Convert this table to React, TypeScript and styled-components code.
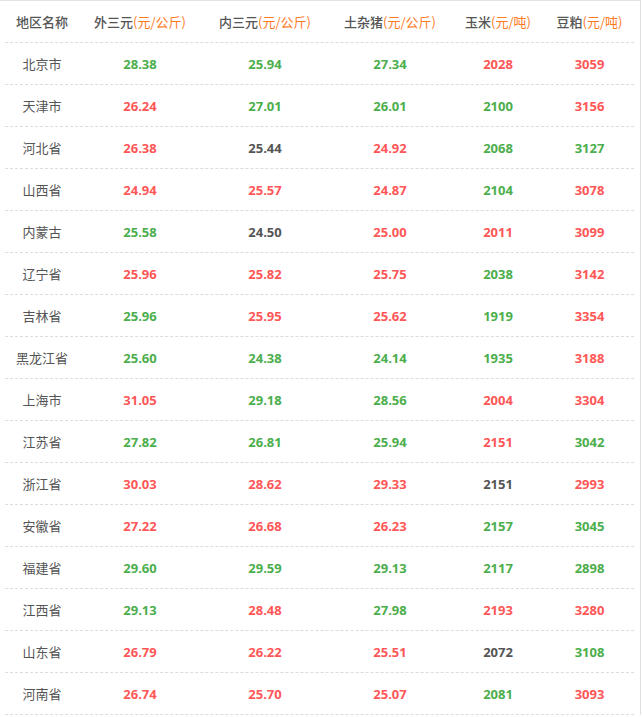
import React, { FC } from 'react';
import styled, { createGlobalStyle } from 'styled-components';

const GlobalStyle = createGlobalStyle`
    body {
        margin: 0;
        background: #fff;
        font-family: 'Open Sans', 'Noto Sans CJK SC', sans-serif;
    }
`;

const Wrapper = styled.div`
    padding: 0 6px 0 5px;
    border-top: 1px solid #e3e3e3;
    border-right: 1px solid #e0e0e0;
    box-sizing: content-box;
    width: 629px;
`;

const Row = styled.div`
    display: grid;
    grid-template-columns: 74px 122px 128px 122px 94px 89px;
    height: 41px;
    align-items: center;
    border-bottom: 1px dashed #dcdcdc;
`;

const HeadCell = styled.div`
    text-align: center;
    font-family: 'Noto Sans CJK SC', sans-serif;
    font-weight: 500;
    font-size: 13px;
    color: #555;
    white-space: nowrap;
`;

const Unit = styled.span`
    color: #ff7a1f;
    font-weight: 400;
`;

const NameCell = styled.div`
    text-align: center;
    font-family: 'Noto Sans CJK SC', sans-serif;
    font-size: 13px;
    color: #555;
`;

type Tone = 'g' | 'r' | 'k';

const toneColor: Record<Tone, string> = {
    g: '#4cae4c',
    r: '#ff5757',
    k: '#555',
};

const Value = styled.div<{ $tone: Tone }>`
    text-align: center;
    font-family: 'Open Sans', sans-serif;
    font-weight: 700;
    font-size: 13px;
    color: ${({ $tone }) => toneColor[$tone]};
`;

const headers: [string, string][] = [
    ['外三元', '(元/公斤)'],
    ['内三元', '(元/公斤)'],
    ['土杂猪', '(元/公斤)'],
    ['玉米', '(元/吨)'],
    ['豆粕', '(元/吨)'],
];

const rows: [string, [string, Tone][]][] = [
    ['北京市', [['28.38', 'g'], ['25.94', 'g'], ['27.34', 'g'], ['2028', 'r'], ['3059', 'r']]],
    ['天津市', [['26.24', 'r'], ['27.01', 'g'], ['26.01', 'g'], ['2100', 'g'], ['3156', 'r']]],
    ['河北省', [['26.38', 'r'], ['25.44', 'k'], ['24.92', 'r'], ['2068', 'g'], ['3127', 'g']]],
    ['山西省', [['24.94', 'r'], ['25.57', 'r'], ['24.87', 'r'], ['2104', 'g'], ['3078', 'r']]],
    ['内蒙古', [['25.58', 'g'], ['24.50', 'k'], ['25.00', 'r'], ['2011', 'r'], ['3099', 'r']]],
    ['辽宁省', [['25.96', 'r'], ['25.82', 'r'], ['25.75', 'r'], ['2038', 'g'], ['3142', 'r']]],
    ['吉林省', [['25.96', 'g'], ['25.95', 'r'], ['25.62', 'r'], ['1919', 'g'], ['3354', 'r']]],
    ['黑龙江省', [['25.60', 'g'], ['24.38', 'g'], ['24.14', 'g'], ['1935', 'g'], ['3188', 'r']]],
    ['上海市', [['31.05', 'r'], ['29.18', 'g'], ['28.56', 'g'], ['2004', 'r'], ['3304', 'r']]],
    ['江苏省', [['27.82', 'g'], ['26.81', 'g'], ['25.94', 'g'], ['2151', 'r'], ['3042', 'g']]],
    ['浙江省', [['30.03', 'r'], ['28.62', 'r'], ['29.33', 'r'], ['2151', 'k'], ['2993', 'r']]],
    ['安徽省', [['27.22', 'r'], ['26.68', 'r'], ['26.23', 'r'], ['2157', 'g'], ['3045', 'g']]],
    ['福建省', [['29.60', 'g'], ['29.59', 'g'], ['29.13', 'g'], ['2117', 'g'], ['2898', 'g']]],
    ['江西省', [['29.13', 'g'], ['28.48', 'r'], ['27.98', 'g'], ['2193', 'r'], ['3280', 'r']]],
    ['山东省', [['26.79', 'r'], ['26.22', 'r'], ['25.51', 'r'], ['2072', 'k'], ['3108', 'g']]],
    ['河南省', [['26.74', 'r'], ['25.70', 'r'], ['25.07', 'r'], ['2081', 'g'], ['3093', 'r']]],
];

const App: FC = () => (
    <>
        <GlobalStyle />
        <Wrapper>
            <Row>
                <HeadCell>地区名称</HeadCell>
                {headers.map(([name, unit]) => (
                    <HeadCell key={name}>
                        {name}
                        <Unit>{unit}</Unit>
                    </HeadCell>
                ))}
            </Row>
            {rows.map(([area, values]) => (
                <Row key={area}>
                    <NameCell>{area}</NameCell>
                    {values.map(([v, tone], i) => (
                        <Value key={i} $tone={tone}>
                            {v}
                        </Value>
                    ))}
                </Row>
            ))}
        </Wrapper>
    </>
);

export default App;
